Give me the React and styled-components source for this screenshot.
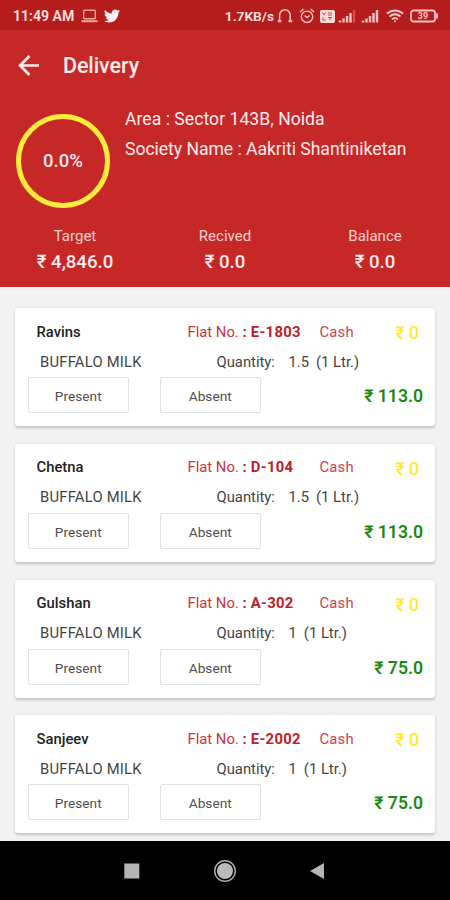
import React from "react";
import styled, { createGlobalStyle } from "styled-components";

const GlobalStyle = createGlobalStyle`
  * { box-sizing: border-box; }
  body { margin: 0; background: #f2f2f2; font-family: Roboto, "Noto Sans", sans-serif; }
`;

const Screen = styled.main`
  width: 450px;
  height: 900px;
  display: flex;
  flex-direction: column;
  overflow: hidden;
  background: #f2f2f2;
`;

const StatusBar = styled.div`
  height: 30px;
  flex: none;
  display: flex;
  align-items: center;
  justify-content: space-between;
  padding: 2px 11px 0 13px;
  background: #b71c1c;
  color: #ffe3e0;
`;

const StatusText = styled.span`
  font-size: ${(p) => p.$size}px;
  line-height: 18px;
  font-weight: 600;
  white-space: nowrap;
`;

const StatusGroup = styled.div`
  display: flex;
  align-items: center;
`;

const StatusIcon = styled.svg`
  display: block;
  flex: none;
  margin-left: ${(p) => p.$gap || 0}px;
`;

const Header = styled.header`
  height: 257px;
  flex: none;
  background: #c62828;
  color: #ffeceb;
`;

const Toolbar = styled.div`
  height: 71px;
  display: flex;
  align-items: center;
  gap: 22px;
  padding-left: 17px;
`;

const BackButton = styled.button`
  width: 24px;
  height: 24px;
  padding: 0;
  border: 0;
  background: none;
  color: inherit;
  svg { display: block; }
`;

const Title = styled.h1`
  margin: 0;
  font-size: 21.5px;
  line-height: 28px;
  font-weight: 500;
  letter-spacing: -0.1px;
`;

const Summary = styled.section`
  display: flex;
  height: 120px;
  padding-left: 16px;
`;

const Progress = styled.div`
  width: 94px;
  height: 94px;
  margin-top: 13.4px;
  border: 5px solid #ffeb3b;
  border-radius: 50%;
  display: flex;
  align-items: center;
  justify-content: center;
  font-size: 18.5px;
  font-weight: 500;
`;

const Place = styled.div`
  margin: 3px 0 0 15px;
  font-size: 17.6px;
  line-height: 30px;
  white-space: nowrap;
`;

const PlaceLine = styled.div`
  letter-spacing: ${(p) => p.$spacing}px;
`;

const Totals = styled.section`
  display: grid;
  grid-template-columns: repeat(3, 150px);
  text-align: center;
  padding-top: 4px;
`;

const TotalLabel = styled.div`
  font-size: 15px;
  line-height: 22px;
  color: #ffd0cc;
`;

const TotalValue = styled.div`
  font-size: 18.6px;
  line-height: 31px;
  font-weight: 500;
`;

const List = styled.section`
  flex: 1;
  min-height: 0;
  overflow: hidden;
  display: flex;
  flex-direction: column;
  gap: 17.7px;
  padding: 21.3px 15px 0;
`;

const Card = styled.article`
  height: 118px;
  flex: none;
  padding: 8px 0 0 13px;
  border-radius: 3px;
  background: #fff;
  box-shadow: 0 1.5px 3px rgba(0, 0, 0, 0.2);
`;

const Row = styled.div`
  height: 30px;
  display: flex;
  align-items: center;
  padding-top: 1px;
  font-size: 14.8px;
  white-space: nowrap;
`;

const Customer = styled.span`
  width: 151px;
  margin-left: 8.5px;
  color: #222;
  font-weight: 500;
`;

const Flat = styled.span`
  width: 132px;
  color: #c8343e;
`;

const FlatNumber = styled.b`
  color: #bd2026;
  font-weight: 700;
  letter-spacing: 0.3px;
`;

const Payment = styled.span`
  color: #c84450;
  letter-spacing: 0.2px;
`;

const Due = styled.span`
  margin: 3px 16px 0 auto;
  color: #ffe92e;
  font-size: 17.5px;
  font-weight: 500;
`;

const Product = styled.span`
  width: 176.5px;
  margin-left: 12px;
  color: #444;
  letter-spacing: 0.22px;
`;

const QuantityLabel = styled.span`
  width: 72px;
  color: #444;
`;

const Quantity = styled.span`
  color: #444;
  margin-right: 7px;
`;

const Actions = styled.div`
  height: 38px;
  display: flex;
  align-items: center;
  gap: 31.5px;
`;

const ActionButton = styled.button`
  width: 100.5px;
  height: 36px;
  padding: 2px 0 0;
  border: 1px solid #e2e2e2;
  border-radius: 2px;
  background: #fff;
  color: #505050;
  font: 400 13.7px Roboto, sans-serif;
`;

const Price = styled.span`
  margin: 2px 12px 0 auto;
  color: #198a0f;
  font-size: 17.6px;
  font-weight: 600;
`;

const NavBar = styled.nav`
  height: 59px;
  flex: none;
  display: flex;
  align-items: center;
  justify-content: center;
  gap: 70px;
  background: #000;
`;

const NavIcon = styled.svg`
  width: 24px;
  height: 24px;
  display: block;
`;

const totals = [
  ["Target", "₹ 4,846.0"],
  ["Recived", "₹ 0.0"],
  ["Balance", "₹ 0.0"],
];

const deliveries = [
  { name: "Ravins", flat: "E-1803", quantity: "1.5", price: "113.0" },
  { name: "Chetna", flat: "D-104", quantity: "1.5", price: "113.0" },
  { name: "Gulshan", flat: "A-302", quantity: "1", price: "75.0" },
  { name: "Sanjeev", flat: "E-2002", quantity: "1", price: "75.0" },
];

function Laptop() {
  return (
    <StatusIcon $gap={6.5} width="17" height="14" viewBox="0 0 17 14" fill="none" stroke="#f2a7a3" strokeWidth="1.4">
      <rect x="2.7" y="1.2" width="11.6" height="8.6" rx="1" />
      <path d="M0.5 12.2H16.5" strokeWidth="2" />
    </StatusIcon>
  );
}

function Bird() {
  return (
    <StatusIcon $gap={6} width="16" height="14" viewBox="0 2 24 20" fill="#fff0ef">
      <path d="M23.95 4.57a10 10 0 0 1-2.82.77 4.96 4.96 0 0 0 2.16-2.72 10 10 0 0 1-3.13 1.19 4.92 4.92 0 0 0-8.38 4.48A13.93 13.93 0 0 1 1.64 3.16a4.92 4.92 0 0 0 1.52 6.57 4.9 4.9 0 0 1-2.23-.61v.06a4.92 4.92 0 0 0 3.95 4.83 5 5 0 0 1-2.21.08 4.94 4.94 0 0 0 4.6 3.42A9.87 9.87 0 0 1 0 19.54a14 14 0 0 0 7.55 2.21c9.05 0 14-7.5 14-13.98 0-.21 0-.42-.02-.63a9.94 9.94 0 0 0 2.42-2.57z" />
    </StatusIcon>
  );
}

function Headphones() {
  return (
    <StatusIcon $gap={3} width="16" height="14" viewBox="0 0 16 14" fill="none" stroke="#ffc5c1">
      <path d="M2.6 12V6.1a5.3 5.3 0 0 1 10.6 0V12" strokeWidth="1.5" />
      <path d="M0.8 12.2h3.6M11.5 12.2h3.7" strokeWidth="2.3" />
    </StatusIcon>
  );
}

function Alarm() {
  return (
    <StatusIcon $gap={6} width="16" height="16" viewBox="0 0 16 16" fill="none" stroke="#ffc5c1" strokeWidth="1.4">
      <circle cx="8" cy="8.8" r="5.7" />
      <path d="M1 4l3.5-3M15 4l-3.5-3M5.5 7.5L8 9.5l2.6-2" />
    </StatusIcon>
  );
}

function VoLte() {
  return (
    <StatusIcon $gap={5} width="15" height="13" viewBox="0 0 15 13">
      <rect width="15" height="13" rx="2" fill="#ffdcda" />
      <path d="M2.5 2.5l1.6 2.5 1.6-2.5M8 3h4M8 5h4M3 7v3h3M8 7.5h4M10 7v3.5" fill="none" stroke="#c14b47" strokeWidth="1" />
    </StatusIcon>
  );
}

function Signal({ gap, weak }) {
  return (
    <StatusIcon $gap={gap} width="18" height="14" viewBox="0 0 18 14" stroke="#ffc5c1" strokeWidth="2.4">
      <path d="M2 11.5v2M5.5 9.5v4M9 7v6.5M12.5 4v9.5" />
      <path d="M16 1v12.5" opacity={weak ? 0.3 : 1} />
    </StatusIcon>
  );
}

function Wifi() {
  return (
    <StatusIcon $gap={7} width="18" height="14" viewBox="0 0 18 14" fill="none" stroke="#ffd0cd" strokeWidth="1.9">
      <path d="M1 4.6Q9-1.8 17 4.6M3.6 7.5Q9 3.2 14.4 7.5M6 10.2Q9 8 12 10.2" />
      <circle cx="9" cy="12.2" r="1" fill="#ffd0cd" stroke="none" />
    </StatusIcon>
  );
}

const BatteryText = styled.text`
  font: 700 9px Roboto, sans-serif;
  fill: #ffc5c1;
`;

function Battery() {
  return (
    <StatusIcon $gap={6} width="29" height="14" viewBox="0 0 29 14">
      <rect x="1" y="1.5" width="24" height="11" rx="2.5" fill="none" stroke="#ffc5c1" strokeWidth="1.8" />
      <path d="M27 4.5v5" stroke="#ffc5c1" strokeWidth="2" />
      <BatteryText x="13" y="10.2" textAnchor="middle">39</BatteryText>
    </StatusIcon>
  );
}

function DeliveryCard({ item }) {
  return (
    <Card>
      <Row>
        <Customer>{item.name}</Customer>
        <Flat>Flat No. <FlatNumber>: {item.flat}</FlatNumber></Flat>
        <Payment>Cash</Payment>
        <Due>₹ 0</Due>
      </Row>
      <Row>
        <Product>BUFFALO MILK</Product>
        <QuantityLabel>Quantity:</QuantityLabel>
        <Quantity>{item.quantity}</Quantity>
        <Quantity>(1 Ltr.)</Quantity>
      </Row>
      <Actions>
        <ActionButton>Present</ActionButton>
        <ActionButton>Absent</ActionButton>
        <Price>₹ {item.price}</Price>
      </Actions>
    </Card>
  );
}

export default function App() {
  return (
    <Screen>
      <GlobalStyle />
      <StatusBar>
        <StatusGroup>
          <StatusText $size={14.1}>11:49 AM</StatusText>
          <Laptop />
          <Bird />
        </StatusGroup>
        <StatusGroup>
          <StatusText $size={13.7}>1.7KB/s</StatusText>
          <Headphones />
          <Alarm />
          <VoLte />
          <Signal gap={3} weak />
          <Signal gap={5} />
          <Wifi />
          <Battery />
        </StatusGroup>
      </StatusBar>
      <Header>
        <Toolbar>
          <BackButton aria-label="Back">
            <svg width="24" height="24" viewBox="0 0 24 24" fill="none" stroke="currentColor" strokeWidth="2.6">
              <path d="M22 11.5H3M12.5 2L3 11.5l9.5 9.5" />
            </svg>
          </BackButton>
          <Title>Delivery</Title>
        </Toolbar>
        <Summary>
          <Progress>0.0%</Progress>
          <Place>
            <PlaceLine $spacing={0.03}>Area : Sector 143B, Noida</PlaceLine>
            <PlaceLine $spacing={-0.04}>Society Name : Aakriti Shantiniketan</PlaceLine>
          </Place>
        </Summary>
        <Totals>
          {totals.map(([label, value]) => (
            <div key={label}>
              <TotalLabel>{label}</TotalLabel>
              <TotalValue>{value}</TotalValue>
            </div>
          ))}
        </Totals>
      </Header>
      <List>
        {deliveries.map((item) => <DeliveryCard key={item.name} item={item} />)}
      </List>
      <NavBar>
        <NavIcon viewBox="0 0 24 24"><rect x="5.3" y="4.5" width="15" height="15" fill="#b5b5b5" /></NavIcon>
        <NavIcon viewBox="0 0 24 24">
          <circle cx="12" cy="12" r="10.3" fill="none" stroke="#aaa" strokeWidth="1.5" />
          <circle cx="12" cy="12" r="8" fill="#bbb" />
        </NavIcon>
        <NavIcon viewBox="0 0 24 24"><path d="M3 12L17 4v16z" fill="#b5b5b5" /></NavIcon>
      </NavBar>
    </Screen>
  );
}
